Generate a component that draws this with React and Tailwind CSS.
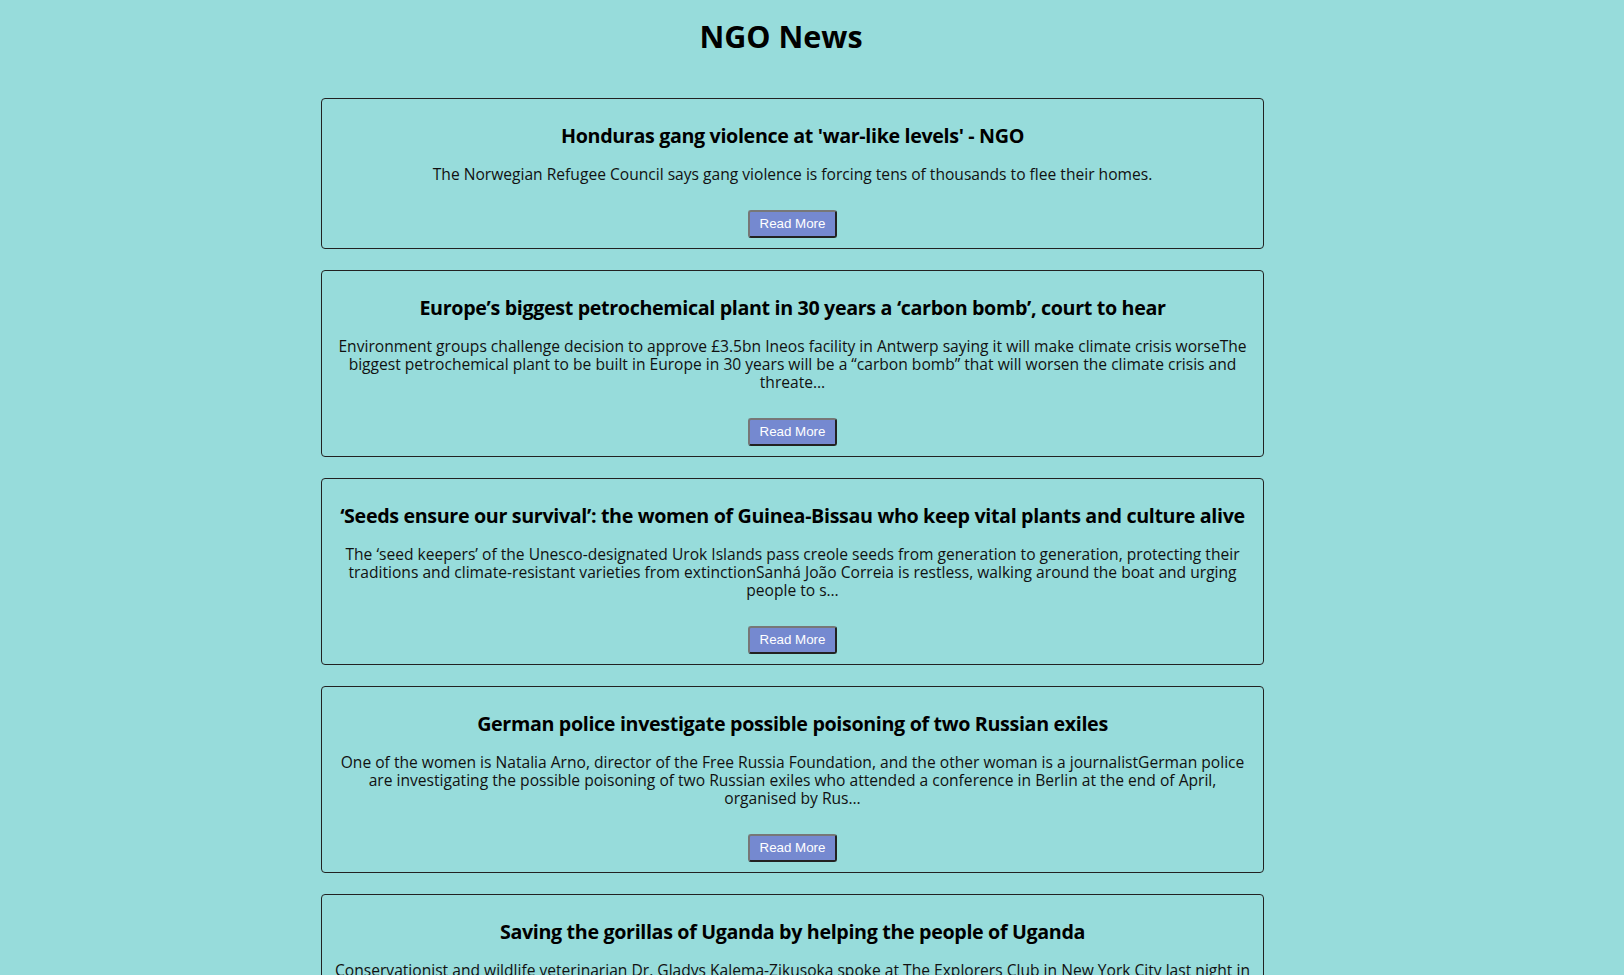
import React from 'react';

const articles = [
  {
    title: "Honduras gang violence at 'war-like levels' - NGO",
    description: 'The Norwegian Refugee Council says gang violence is forcing tens of thousands to flee their homes.',
  },
  {
    title: 'Europe’s biggest petrochemical plant in 30 years a ‘carbon bomb’, court to hear',
    description:
      'Environment groups challenge decision to approve £3.5bn Ineos facility in Antwerp saying it will make climate crisis worseThe biggest petrochemical plant to be built in Europe in 30 years will be a “carbon bomb” that will worsen the climate crisis and threate…',
  },
  {
    title: '‘Seeds ensure our survival’: the women of Guinea-Bissau who keep vital plants and culture alive',
    description:
      'The ‘seed keepers’ of the Unesco-designated Urok Islands pass creole seeds from generation to generation, protecting their traditions and climate-resistant varieties from extinctionSanhá João Correia is restless, walking around the boat and urging people to s…',
  },
  {
    title: 'German police investigate possible poisoning of two Russian exiles',
    description:
      'One of the women is Natalia Arno, director of the Free Russia Foundation, and the other woman is a journalistGerman police are investigating the possible poisoning of two Russian exiles who attended a conference in Berlin at the end of April, organised by Rus…',
  },
  {
    title: 'Saving the gorillas of Uganda by helping the people of Uganda',
    description:
      'Conservationist and wildlife veterinarian Dr. Gladys Kalema-Zikusoka spoke at The Explorers Club in New York City last night in front of an audience of explorers, scientists and supporters about her work…',
  },
];

const NewsCard = ({ article }) => (
  <div className="border border-[#222] rounded-[4px] px-[12px] pt-[24px] pb-[10px] mb-[21px] text-center">
    <h3 className="text-[19.7px] leading-[26px] tracking-[-0.35px] font-bold text-black">{article.title}</h3>
    <p className="mt-[16px] text-[15.6px] leading-[18px] text-[#111]">{article.description}</p>
    <button
      type="button"
      className="mt-[27px] h-[28px] px-[10px] bg-[#7589d0] text-white text-[13.33px] rounded-[3px] border-2 border-t-[#777] border-l-[#777] border-b-[#222] border-r-[#222]"
      style={{ fontFamily: '"Liberation Sans", Arial, sans-serif' }}
    >
      Read More
    </button>
  </div>
);

export default function App() {
  return (
    <div className="min-h-screen bg-[#97dcdb]" style={{ fontFamily: '"Open Sans", "Noto Sans", sans-serif' }}>
      <h1 className="pt-[17px] pr-[62px] text-center text-[30.5px] leading-[38px] font-bold text-black">NGO News</h1>
      <div className="pt-[43px] pr-[39px]">
        <div className="mx-auto w-[943px]">
          {articles.map((article, i) => (
            <NewsCard key={i} article={article} />
          ))}
        </div>
      </div>
    </div>
  );
}
